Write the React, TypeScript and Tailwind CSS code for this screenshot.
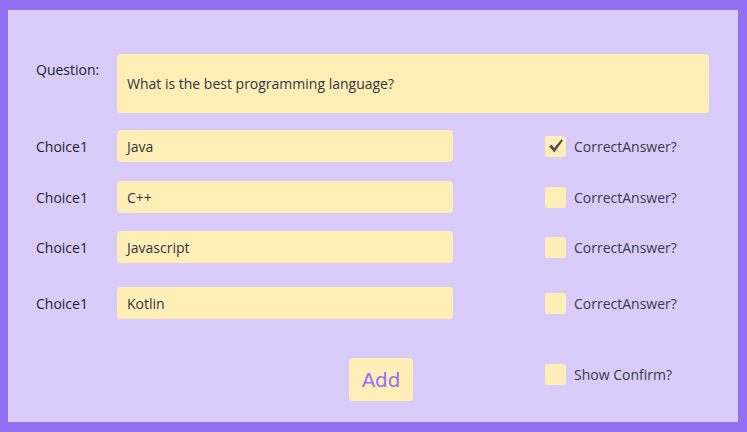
const choices = [
  { text: "Java", checked: true, mt: "mt-[17px]" },
  { text: "C++", checked: false, mt: "mt-[19px]" },
  { text: "Javascript", checked: false, mt: "mt-[18px]" },
  { text: "Kotlin", checked: false, mt: "mt-[24px]" },
];

function Box({ checked }: { checked: boolean }) {
  return (
    <span className="flex h-[21px] w-[21px] items-center justify-center rounded-[3px] bg-[#ffefb6]">
      {checked && (
        <svg viewBox="0 0 20 20" className="h-[18px] w-[18px]" fill="#505050">
          <path d="M2.5 10.5 L5 8.3 L8 12.2 L16 2.5 L17.6 4 L8.2 17.2 Z" />
        </svg>
      )}
    </span>
  );
}

export default function App() {
  return (
    <div
      className="h-[432px] w-[747px] border-t-[10px] border-b-[10px] border-l-[8px] border-r-[9px] border-[#9370f3] bg-[#d9cbfa] text-[14px] text-[#1e1e2a]"
      style={{ fontFamily: "'Open Sans', sans-serif" }}
    >
      <div className="pl-[28px] pt-[44px]">
        {/* question */}
        <div className="flex items-start">
          <div className="w-[81px] pt-[5px]">Question:</div>
          <div className="flex h-[59px] w-[592px] items-center rounded-[4px] bg-[#ffefb6] px-[10px] text-[#333344]">
            What is the best programming language?
          </div>
        </div>

        {/* choices */}
        {choices.map((c) => (
          <div key={c.text} className={`flex items-center ${c.mt}`}>
            <div className="w-[81px]">Choice1</div>
            <div className="flex h-[32px] w-[336px] items-center rounded-[4px] bg-[#ffefb6] px-[10px] text-[#333344]">
              {c.text}
            </div>
            <label className="ml-[92px] flex items-center gap-[8px] text-[#3a3a48]">
              <Box checked={c.checked} />
              CorrectAnswer?
            </label>
          </div>
        ))}

        {/* footer */}
        <div className="mt-[39px] flex items-start">
          <div className="w-[313px]" />
          <button
            className="flex h-[43px] w-[64px] items-center justify-center rounded-[4px] bg-[#ffefb6] text-[20px] text-[#9370f3]"
            style={{ fontFamily: "'Comic Sans MS', 'DejaVu Sans', sans-serif" }}
          >
            Add
          </button>
          <label className="ml-[132px] mt-[6px] flex items-center gap-[8px] text-[#3a3a48]">
            <Box checked={false} />
            Show Confirm?
          </label>
        </div>
      </div>
    </div>
  );
}
